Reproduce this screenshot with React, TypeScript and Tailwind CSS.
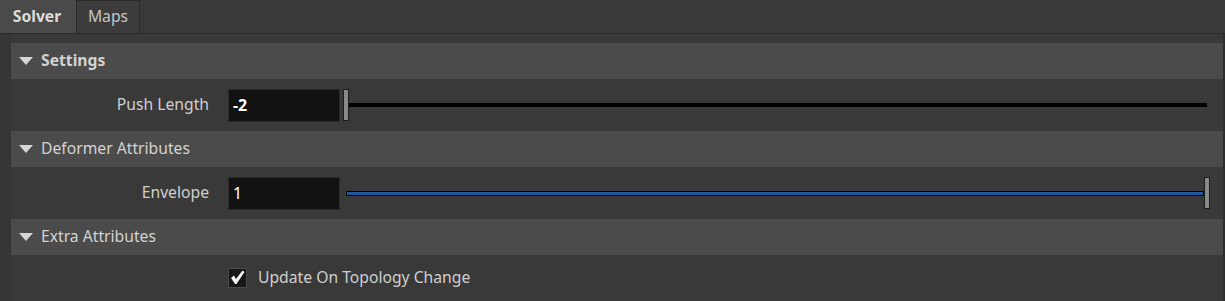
import React from "react";

function Caret() {
  return (
    <svg width="14" height="9" viewBox="0 0 14 9" className="shrink-0">
      <path d="M0 0 H14 L7 8 Z" fill="#d6d6d6" />
    </svg>
  );
}

function SectionHeader({ title, bold }: { title: string; bold?: boolean }) {
  return (
    <div className="flex items-center h-[36px] bg-[#4b4b4b] pl-[8px] gap-[8px]">
      <Caret />
      <span className={`text-[15.7px] text-[#d2d2d2] ${bold ? "font-bold" : ""}`}>
        {title}
      </span>
    </div>
  );
}

function Label({ children }: { children: React.ReactNode }) {
  return (
    <div className="w-[198px] text-right text-[15.7px] text-[#cfcfcf]">
      {children}
    </div>
  );
}

function NumberField({ value, bold }: { value: string; bold?: boolean }) {
  return (
    <div
      className={`ml-[19px] w-[112px] h-[33px] bg-[#121212] border border-[#2c2c2c] flex items-center px-[4px] text-[16px] text-white ${
        bold ? "font-bold" : ""
      }`}
    >
      {value}
    </div>
  );
}

function Handle() {
  return (
    <div className="w-[6px] h-[32px] bg-[#8a8a8a] border border-[#1c1c1c] shrink-0" />
  );
}

export default function App() {
  return (
    <div
      className="w-[1225px] h-[301px] bg-[#393939] overflow-hidden"
      style={{ fontFamily: '"Noto Sans", "Open Sans", sans-serif' }}
    >
      <div className="flex h-[34px] border-b border-[#2a2a2a]">
        <div className="w-[76px] bg-[#4a4a4a] flex items-center justify-center pr-[2px] font-bold text-[15.7px] text-[#dcdcdc]">
          Solver
        </div>
        <div className="w-[64px] bg-[#3c3c3c] border border-b-0 border-[#2a2a2a] flex items-center justify-center text-[15.7px] text-[#c4c4c4]">
          Maps
        </div>
      </div>
      <div className="flex h-[267px]">
        <div className="w-[11px] bg-[#363636]" />
        <div className="w-[1212px] pt-[9px] flex flex-col">
          <SectionHeader title="Settings" bold />
          <div className="flex items-center h-[52px]">
            <Label>Push Length</Label>
            <NumberField value="-2" bold />
            <div className="flex items-center ml-[3px]">
              <Handle />
              <div className="w-[858px] h-[4px] bg-black" />
            </div>
          </div>
          <SectionHeader title="Deformer Attributes" />
          <div className="flex items-center h-[52px]">
            <Label>Envelope</Label>
            <NumberField value="1" />
            <div className="flex items-center ml-[6px]">
              <div className="w-[858px] h-[5px] bg-[#1d57a0] border border-black" />
              <Handle />
            </div>
          </div>
          <SectionHeader title="Extra Attributes" />
          <div className="flex items-center h-[45px]">
            <div className="ml-[217px] w-[19px] h-[20px] bg-[#161616] border border-[#4a4a4a] flex items-center justify-center">
              <svg width="15" height="15" viewBox="0 0 15 15">
                <path d="M1 8 L4 5.5 L6 9 L12.5 0.5 L14.5 2 L6.5 14 L5 14 Z" fill="#f0f0f0" />
              </svg>
            </div>
            <span className="ml-[11px] text-[15.7px] text-[#cfcfcf]">
              Update On Topology Change
            </span>
          </div>
        </div>
        <div className="w-[2px] bg-[#2e2e2e]" />
      </div>
    </div>
  );
}
